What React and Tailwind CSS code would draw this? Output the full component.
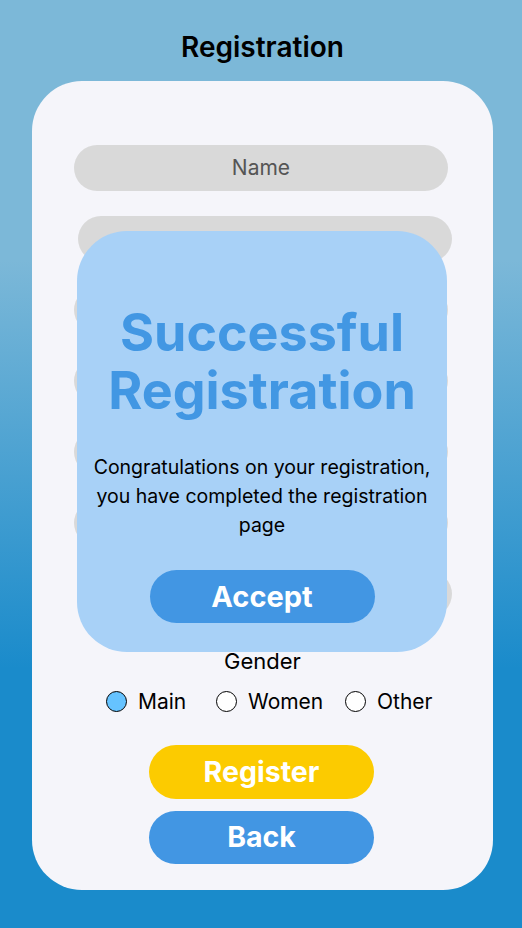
import React from "react";

const font = { fontFamily: "Inter, 'Noto Sans', sans-serif" };

function Field({ label, shift }) {
  return (
    <div
      className={`h-[46px] w-[374px] rounded-full bg-[#d9d9d9] flex items-center justify-center text-[21px] text-[#555555] ${
        shift ? "ml-[46px]" : "ml-[42px]"
      }`}
    >
      {label}
    </div>
  );
}

function Radio({ label, checked, width }) {
  return (
    <div className={`flex items-center gap-[11px] ${width}`}>
      <span
        className={`w-[21px] h-[21px] rounded-full border-[1.5px] border-black ${
          checked ? "bg-[#66c3ff]" : "bg-white"
        }`}
      />
      <span className="text-[21px] text-black leading-none">{label}</span>
    </div>
  );
}

export default function App() {
  return (
    <div
      style={font}
      className="min-h-[928px] w-full bg-[linear-gradient(to_bottom,#7cb8d8_0%,#7cb8d8_28%,#1a8bcb_72%,#1a8bcb_100%)] flex flex-col"
    >
      <h1 className="mt-[28px] h-[38px] text-center ml-[3px] text-[28px] font-semibold text-black leading-[38px]">
        Registration
      </h1>
      <div className="relative mt-[15px] ml-[32px] w-[461px] h-[809px] rounded-[50px] bg-[#f5f5fa] flex flex-col pt-[64px]">
        <div className="flex flex-col gap-[25px]">
          <Field label="Name" />
          <Field shift />
          <Field />
          <Field />
          <Field />
          <Field />
          <Field shift />
        </div>
        <div className="mt-[31px] text-center text-[22px] leading-[26px] text-black">Gender</div>
        <div className="mt-[17px] flex items-center ml-[74px]">
          <Radio label="Main" checked width="w-[110px]" />
          <Radio label="Women" width="w-[129px]" />
          <Radio label="Other" />
        </div>
        <div className="mt-[33px] flex flex-col items-center gap-[12px] mr-[2px]">
          <button className="w-[225px] h-[54px] rounded-full bg-[#fccb00] text-white text-[28.5px] font-bold">
            Register
          </button>
          <button className="w-[225px] h-[53px] rounded-full bg-[#4296e3] text-white text-[28.5px] font-bold">
            Back
          </button>
        </div>

        <div className="absolute left-[45px] top-[150px] w-[370px] h-[421px] rounded-[50px] bg-[#a8d1f7] flex flex-col items-center pt-[73px]">
          <h2 className="text-[52px] leading-[58px] font-bold text-[#4297e3] text-center whitespace-nowrap">
            Successful
            <br />
            Registration
          </h2>
          <p className="mt-[33px] text-[19.5px] leading-[29px] text-black text-center whitespace-nowrap">
            Congratulations on your registration,
            <br />
            you have completed the registration
            <br />
            page
          </p>
          <button className="mt-[30px] w-[225px] h-[53px] rounded-full bg-[#4296e3] text-white text-[29px] font-bold">
            Accept
          </button>
        </div>
      </div>
    </div>
  );
}
